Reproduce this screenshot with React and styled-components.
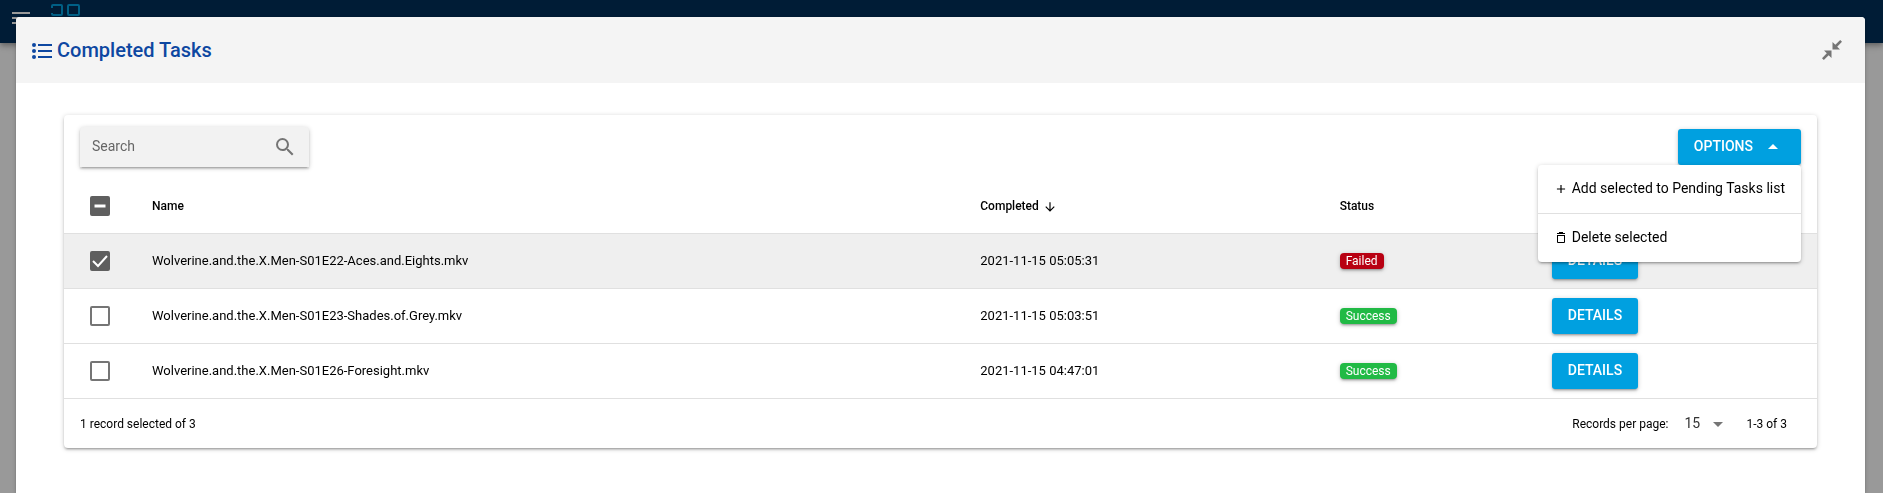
import React, { useEffect, useRef, useState } from 'react';
import styled, { createGlobalStyle } from 'styled-components';
import {
  MdAdd,
  MdArrowDropDown,
  MdArrowDropUp,
  MdOutlineArrowDownward,
  MdSearch,
} from 'react-icons/md';

const GlobalStyle = createGlobalStyle`
  *, *::before, *::after {
    box-sizing: border-box;
  }
  body {
    margin: 0;
    background: #fff;
    color: #000;
    font-family: Roboto, "Liberation Sans", sans-serif;
    font-size: 14px;
    line-height: 20px;
  }
  button, input, select {
    font: inherit;
    color: inherit;
  }
`;

const cardShadow = `
  0 1px 5px rgba(0, 0, 0, 0.2),
  0 2px 2px rgba(0, 0, 0, 0.14),
  0 3px 1px -2px rgba(0, 0, 0, 0.12)
`;

const Page = styled.div`
  min-height: 100vh;
`;

const AppBar = styled.header`
  height: 43px;
  padding: 0 12px;
  display: flex;
  align-items: flex-start;
  gap: 21px;
  background: #002f5b;
  color: #fff;
  box-shadow: 0 2px 4px -1px rgba(0, 0, 0, 0.2), 0 4px 5px rgba(0, 0, 0, 0.14),
    0 1px 10px rgba(0, 0, 0, 0.12);
`;

const MenuToggle = styled.button`
  margin-top: 12px;
  padding: 0;
  border: 0;
  background: none;
  display: flex;
`;

const Logo = styled.svg`
  margin-top: 4px;
  fill: none;
  stroke: #00a0e0;
  stroke-width: 2;
`;

const Backdrop = styled.div`
  position: fixed;
  inset: 0;
  padding: 17px 18px 0 16px;
  display: flex;
  background: rgba(0, 0, 0, 0.4);
`;

const Modal = styled.section`
  flex: 1;
  background: #fff;
  border-radius: 4px 4px 0 0;
  box-shadow: ${cardShadow};
`;

const ModalHeader = styled.div`
  height: 66px;
  padding: 0 16px;
  display: flex;
  align-items: center;
  justify-content: space-between;
  background: #f4f4f4;
  border-radius: 4px 4px 0 0;
`;

const Title = styled.h1`
  margin: 0;
  display: flex;
  align-items: center;
  gap: 5px;
  color: #0d47a1;
  font-size: 20px;
  font-weight: 500;
  line-height: 32px;
  svg {
    margin-top: 2px;
  }
`;

const IconButton = styled.button`
  padding: 7px;
  border: 0;
  background: none;
  color: #757575;
  display: flex;
`;

const ModalBody = styled.div`
  padding: 32px 48px;
`;

const Card = styled.div`
  border-radius: 4px;
  background: #fff;
  box-shadow: ${cardShadow};
`;

const Toolbar = styled.div`
  padding: 12px 16px;
  display: flex;
  align-items: center;
  justify-content: space-between;
`;

const SearchBox = styled.label`
  width: 229px;
  height: 40px;
  padding: 0 12px;
  display: flex;
  align-items: center;
  background: #f2f2f2;
  color: #757575;
  border-radius: 4px 4px 0 0;
  box-shadow: ${cardShadow};
`;

const SearchInput = styled.input`
  flex: 1;
  min-width: 0;
  padding: 0 0 2px;
  border: 0;
  outline: 0;
  background: none;
  &::placeholder {
    color: #666;
    opacity: 1;
  }
`;

const Button = styled.button`
  height: 36px;
  padding: 0 16px 2px;
  display: flex;
  align-items: center;
  gap: 8px;
  border: 0;
  border-radius: 3px;
  background: #00a0e0;
  color: #fff;
  font-size: 14px;
  font-weight: 500;
  text-transform: uppercase;
  box-shadow: ${cardShadow};
  svg {
    margin-top: 2px;
  }
`;

const Dropdown = styled.div`
  position: relative;
  display: flex;
`;

const Menu = styled.div`
  position: absolute;
  top: 100%;
  right: 0;
  z-index: 1;
  border-radius: 4px;
  background: #fff;
  box-shadow: ${cardShadow};
`;

const MenuItem = styled.button`
  width: 100%;
  height: 48px;
  padding: 0 16px 2px;
  display: flex;
  align-items: center;
  gap: 4px;
  border: 0;
  background: none;
  color: #000;
  white-space: nowrap;
  svg {
    margin-top: 2px;
  }
  & + & {
    height: 49px;
    border-top: 1px solid #e0e0e0;
  }
`;

const Table = styled.table`
  width: 100%;
  table-layout: fixed;
  border-collapse: separate;
  border-spacing: 0;
`;

const HeadCell = styled.th`
  width: ${(props) => props.$width || 'auto'};
  height: 55px;
  padding: 0 16px;
  border-bottom: 1px solid #e0e0e0;
  text-align: left;
  font-size: 12px;
  font-weight: 500;
`;

const SortIcon = styled(MdOutlineArrowDownward)`
  margin-left: 4px;
  vertical-align: -4px;
`;

const Row = styled.tr`
  background: ${(props) => (props.$selected ? '#efefef' : '#fff')};
`;

const Cell = styled.td`
  height: 55px;
  padding: 0 16px;
  border-bottom: 1px solid #e0e0e0;
  font-size: 13px;
`;

const CheckWrap = styled.label`
  width: 20px;
  height: 20px;
  margin-left: 10px;
  display: grid;
  > * {
    grid-area: 1 / 1;
  }
  svg {
    pointer-events: none;
    fill: none;
    stroke: #fff;
  }
`;

const CheckInput = styled.input`
  appearance: none;
  width: 20px;
  height: 20px;
  margin: 0;
  border: 2px solid #757575;
  border-radius: 2px;
  &:checked,
  &:indeterminate {
    border-color: #5f5f5f;
    background: #5f5f5f;
  }
`;

const Badge = styled.span`
  display: block;
  width: fit-content;
  height: 16px;
  padding: 0 6px;
  border-radius: 4px;
  background: ${(props) => (props.$status === 'Failed' ? '#b80012' : '#21ba45')};
  color: #fff;
  font-size: 12px;
  line-height: 16px;
  box-shadow: ${cardShadow};
`;

const Footer = styled.div`
  height: 49px;
  padding: 0 30px 0 16px;
  display: flex;
  align-items: center;
  justify-content: space-between;
  font-size: 12px;
`;

const Paging = styled.div`
  display: flex;
  align-items: center;
`;

const PageSize = styled.div`
  margin: 0 16px;
  display: grid;
  align-items: center;
  color: #757575;
  > * {
    grid-area: 1 / 1;
  }
  svg {
    justify-self: end;
    pointer-events: none;
  }
`;

const Select = styled.select`
  appearance: none;
  width: 46px;
  padding: 0 0 2px;
  border: 0;
  background: none;
  color: #333;
  font-size: 14px;
`;

const tasks = [
  {
    name: 'Wolverine.and.the.X.Men-S01E22-Aces.and.Eights.mkv',
    completed: '2021-11-15 05:05:31',
    status: 'Failed',
  },
  {
    name: 'Wolverine.and.the.X.Men-S01E23-Shades.of.Grey.mkv',
    completed: '2021-11-15 05:03:51',
    status: 'Success',
  },
  {
    name: 'Wolverine.and.the.X.Men-S01E26-Foresight.mkv',
    completed: '2021-11-15 04:47:01',
    status: 'Success',
  },
];

function ListIcon() {
  return (
    <svg width="20" height="16" viewBox="0 0 20 16" fill="currentColor">
      <circle cx="2" cy="2" r="2" />
      <circle cx="2" cy="8" r="2" />
      <circle cx="2" cy="14" r="2" />
      <path d="M6 1h14v2H6zM6 7h14v2H6zM6 13h14v2H6z" />
    </svg>
  );
}

function CollapseIcon() {
  return (
    <svg width="20" height="20" viewBox="0 0 20 20" fill="currentColor">
      <path d="M10.5 2v7.5H18l-2.8-2.8L20 1.8 18.2 0l-4.9 4.8zM9.5 18v-7.5H2l2.8 2.8L0 18.2 1.8 20l4.9-4.8z" />
    </svg>
  );
}

function TrashIcon() {
  return (
    <svg width="14" height="14" viewBox="0 0 14 14" fill="currentColor">
      <path
        d="M5 1h4v1h2v1H3V2h2zM3 4h8v7a1 1 0 0 1-1 1H4a1 1 0 0 1-1-1zM4 5v6h6V5z"
        fillRule="evenodd"
      />
    </svg>
  );
}

function Checkbox({ label, checked, partial, onChange }) {
  const ref = useRef(null);

  useEffect(() => {
    ref.current.indeterminate = !!partial;
  }, [partial]);

  return (
    <CheckWrap>
      <CheckInput
        ref={ref}
        type="checkbox"
        aria-label={label}
        checked={checked}
        onChange={onChange}
      />
      {partial && (
        <svg width="20" height="20" viewBox="0 0 20 20">
          <path d="M4.5 10h11" strokeWidth="3" />
        </svg>
      )}
      {checked && !partial && (
        <svg width="20" height="20" viewBox="0 0 20 20">
          <path d="M3 10l5 5L17 5" strokeWidth="2" />
        </svg>
      )}
    </CheckWrap>
  );
}

function OptionsMenu() {
  const [open, setOpen] = useState(true);

  return (
    <Dropdown>
      <Button aria-expanded={open} onClick={() => setOpen(!open)}>
        Options
        {open ? <MdArrowDropUp size={24} /> : <MdArrowDropDown size={24} />}
      </Button>
      {open && (
        <Menu>
          <MenuItem>
            <MdAdd size={14} />
            Add selected to Pending Tasks list
          </MenuItem>
          <MenuItem>
            <TrashIcon />
            Delete selected
          </MenuItem>
        </Menu>
      )}
    </Dropdown>
  );
}

function App() {
  const [selected, setSelected] = useState([0]);
  const all = selected.length === tasks.length;

  const toggle = (index) =>
    setSelected(
      selected.includes(index)
        ? selected.filter((i) => i !== index)
        : [...selected, index]
    );

  return (
    <>
      <GlobalStyle />
      <Page>
        <AppBar>
          <MenuToggle aria-label="Menu">
            <svg width="18" height="12" viewBox="0 0 18 12" fill="currentColor">
              <path d="M0 0h18v2H0zM0 5h18v2H0zM0 10h18v2H0z" />
            </svg>
          </MenuToggle>
          <Logo width="30" height="30" viewBox="0 0 30 30">
            <path d="M1 4V2a1 1 0 0 1 1-1h8a1 1 0 0 1 1 1v8a1 1 0 0 1-1 1H2a1 1 0 0 1-1-1V9" />
            <rect x="17" y="1" width="11" height="10" rx="1" />
          </Logo>
        </AppBar>
      </Page>
      <Backdrop>
        <Modal role="dialog" aria-labelledby="dialog-title">
          <ModalHeader>
            <Title id="dialog-title">
              <ListIcon />
              Completed Tasks
            </Title>
            <IconButton aria-label="Close">
              <CollapseIcon />
            </IconButton>
          </ModalHeader>
          <ModalBody>
            <Card>
              <Toolbar>
                <SearchBox>
                  <SearchInput placeholder="Search" aria-label="Search" />
                  <MdSearch size={24} />
                </SearchBox>
                <OptionsMenu />
              </Toolbar>
              <Table>
                <thead>
                  <tr>
                    <HeadCell $width="72px">
                      <Checkbox
                        label="Select all"
                        checked={all}
                        partial={selected.length > 0 && !all}
                        onChange={() =>
                          setSelected(all ? [] : tasks.map((_, i) => i))
                        }
                      />
                    </HeadCell>
                    <HeadCell $width="47.25%">Name</HeadCell>
                    <HeadCell $width="20.5%">
                      Completed
                      <SortIcon size={14} />
                    </HeadCell>
                    <HeadCell $width="12.1%">Status</HeadCell>
                    <HeadCell aria-label="Actions" />
                  </tr>
                </thead>
                <tbody>
                  {tasks.map((task, index) => (
                    <Row key={task.name} $selected={selected.includes(index)}>
                      <Cell>
                        <Checkbox
                          label={task.name}
                          checked={selected.includes(index)}
                          onChange={() => toggle(index)}
                        />
                      </Cell>
                      <Cell>{task.name}</Cell>
                      <Cell>{task.completed}</Cell>
                      <Cell>
                        <Badge $status={task.status}>{task.status}</Badge>
                      </Cell>
                      <Cell>
                        <Button>Details</Button>
                      </Cell>
                    </Row>
                  ))}
                </tbody>
              </Table>
              <Footer>
                <span>
                  {selected.length} record selected of {tasks.length}
                </span>
                <Paging>
                  <label htmlFor="page-size">Records per page:</label>
                  <PageSize>
                    <Select id="page-size" defaultValue="15">
                      <option>15</option>
                      <option>30</option>
                      <option>50</option>
                    </Select>
                    <MdArrowDropDown size={24} />
                  </PageSize>
                  <span>1-3 of 3</span>
                </Paging>
              </Footer>
            </Card>
          </ModalBody>
        </Modal>
      </Backdrop>
    </>
  );
}

export default App;
